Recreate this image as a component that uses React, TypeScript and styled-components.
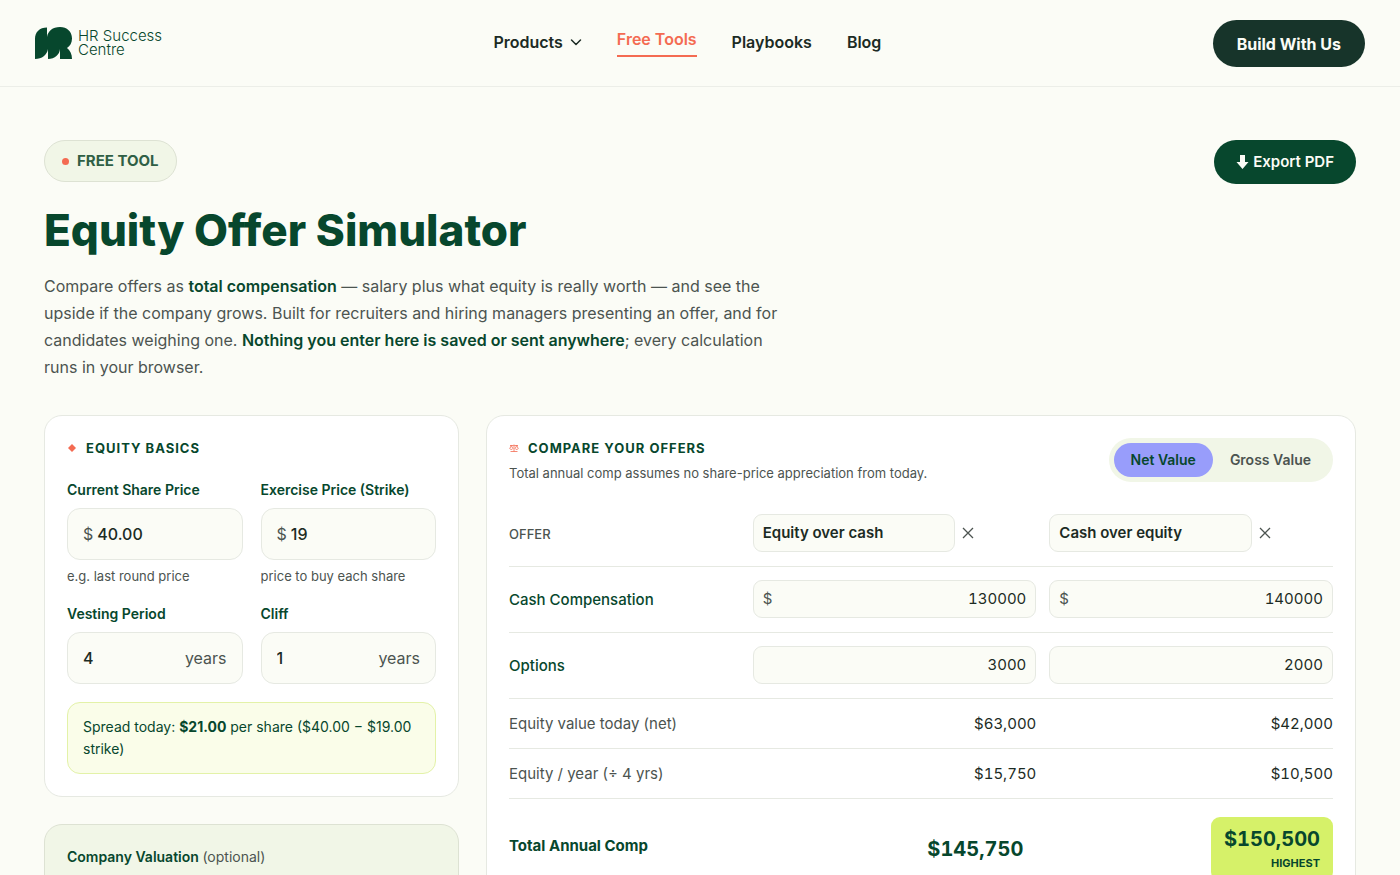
import React, { useState } from "react";
import styled, { createGlobalStyle } from "styled-components";

const green = "#07472d";
const ink = "#1c2b24";
const muted = "#4c5450";
const cream = "#fbfcf6";
const line = "#e6e9e2";
const coral = "#f46b52";
const sage = "#f1f6e7";

const GlobalStyle = createGlobalStyle`
  *, *::before, *::after { box-sizing: border-box; }
  body {
    margin: 0;
    background: ${cream};
    color: ${ink};
    font-family: Inter, "Liberation Sans", sans-serif;
    font-size: 16px;
    line-height: 24px;
  }
  button, input { font: inherit; color: inherit; }
`;

const Header = styled.header`
  display: flex;
  align-items: center;
  justify-content: space-between;
  padding: 20px 35px 19px;
  border-bottom: 1px solid #eceee8;
`;

const Logo = styled.a`
  display: flex;
  align-items: center;
  gap: 6px;
  padding-bottom: 2px;
  color: ${green};
  font-size: 15px;
  font-weight: 300;
  line-height: 14px;
  text-decoration: none;
`;

const Nav = styled.nav`
  display: flex;
  align-items: center;
  gap: 35px;
  padding-bottom: 3px;
`;

const NavLink = styled.a<{ $active?: boolean }>`
  display: flex;
  align-items: center;
  gap: 7px;
  padding-bottom: ${(p) => (p.$active ? "4px" : "0")};
  border-bottom: ${(p) => (p.$active ? `2px solid ${coral}` : "0")};
  color: ${(p) => (p.$active ? coral : ink)};
  font-size: 16px;
  font-weight: 600;
  text-decoration: none;
`;

const PillButton = styled.button<{ $dark?: boolean }>`
  display: flex;
  align-items: center;
  gap: 4px;
  height: ${(p) => (p.$dark ? "47px" : "44px")};
  padding: 0 ${(p) => (p.$dark ? "24px" : "22px")};
  border: 0;
  border-radius: 24px;
  background: ${(p) => (p.$dark ? "#17342a" : green)};
  color: ${cream};
  font-size: ${(p) => (p.$dark ? "16px" : "15px")};
  font-weight: ${(p) => (p.$dark ? 700 : 600)};
  white-space: nowrap;
  cursor: pointer;
`;

const Main = styled.main`
  padding: 53px 44px;
`;

const Intro = styled.section`
  display: flex;
  align-items: flex-start;
  justify-content: space-between;
  margin-bottom: 34px;
`;

const IntroText = styled.div`
  max-width: 740px;
`;

const Badge = styled.span`
  display: inline-flex;
  align-items: center;
  gap: 8px;
  height: 42px;
  padding: 0 17px;
  border: 1px solid #dde2d3;
  border-radius: 21px;
  background: ${sage};
  color: #2f5f45;
  font-size: 15px;
  font-weight: 700;

  &::before {
    width: 7px;
    height: 7px;
    border-radius: 50%;
    background: ${coral};
    content: "";
  }
`;

const Title = styled.h1`
  margin: 22px 0 17px;
  color: ${green};
  font-size: 44px;
  font-weight: 800;
  line-height: 52px;
`;

const Lead = styled.p`
  margin: 0;
  color: ${muted};
  font-size: 16px;
  line-height: 27px;

  strong { color: ${green}; font-weight: 600; }
`;

const Columns = styled.div`
  display: grid;
  grid-template-columns: 415fr 870fr;
  align-items: start;
  gap: 27px;
`;

const SideColumn = styled.div`
  display: grid;
  gap: 27px;
`;

const Card = styled.section<{ $tinted?: boolean }>`
  padding: 22px;
  border: 1px solid ${(p) => (p.$tinted ? "#dde2d3" : line)};
  border-radius: 18px;
  background: ${(p) => (p.$tinted ? sage : "#ffffff")};
`;

const CardTitle = styled.h2`
  display: flex;
  align-items: center;
  gap: 9px;
  margin: 0;
  color: ${green};
  font-size: 13px;
  font-weight: 700;
  letter-spacing: 1px;
  line-height: 20px;
  text-transform: uppercase;
`;

const FieldGrid = styled.div`
  display: grid;
  grid-template-columns: 1fr 1fr;
  gap: 18px;
  margin: 22px 0 18px;
`;

const Field = styled.div`
  min-width: 0;
`;

const Label = styled.label`
  display: block;
  margin-bottom: 8px;
  color: ${green};
  font-size: 14px;
  font-weight: 600;
  line-height: 20px;
`;

const Hint = styled.p`
  margin: 6px 0 0;
  color: ${muted};
  font-size: 13px;
  line-height: 20px;
`;

const InputBox = styled.div<{ $compact?: boolean }>`
  display: flex;
  align-items: center;
  gap: 4px;
  height: ${(p) => (p.$compact ? "38px" : "52px")};
  padding: 0 ${(p) => (p.$compact ? "9px" : "15px")};
  border: 1px solid ${line};
  border-radius: ${(p) => (p.$compact ? "9px" : "13px")};
  background: ${cream};
  color: ${muted};
  font-size: ${(p) => (p.$compact ? "15px" : "16px")};
`;

const BareInput = styled.input<{ $end?: boolean; $strong?: boolean }>`
  flex: 1;
  width: 0;
  min-width: 0;
  padding: 0;
  border: 0;
  outline: 0;
  background: transparent;
  color: ${ink};
  font-weight: ${(p) => (p.$strong ? 600 : p.$end ? 400 : 500)};
  font-variant-numeric: ${(p) => (p.$end ? "tabular-nums" : "normal")};
  text-align: ${(p) => (p.$end ? "right" : "left")};
`;

const Note = styled.p`
  margin: 0;
  padding: 13px 15px;
  border: 1px solid #e3f2a8;
  border-radius: 13px;
  background: #fafde9;
  color: ${green};
  font-size: 14px;
  line-height: 22px;
`;

const Optional = styled.span`
  color: ${muted};
  font-weight: 400;
`;

const CompareHead = styled.div`
  display: flex;
  align-items: flex-start;
  justify-content: space-between;
  margin-bottom: 17px;
`;

const Caption = styled.p`
  margin: 4px 0 0;
  color: ${muted};
  font-size: 13px;
  line-height: 22px;
`;

const Toggle = styled.div`
  display: flex;
  padding: 5px;
  border-radius: 22px;
  background: ${sage};
`;

const ToggleButton = styled.button<{ $on: boolean }>`
  height: 34px;
  padding: 0 17px;
  border: 0;
  border-radius: 17px;
  background: ${(p) => (p.$on ? "#989dfb" : "transparent")};
  color: ${(p) => (p.$on ? green : muted)};
  font-size: 14px;
  font-weight: 600;
  cursor: pointer;
`;

const Table = styled.table`
  width: 100%;
  border-collapse: collapse;
  table-layout: fixed;
  font-size: 15px;

  tbody tr:last-child { border-bottom: 0; }
`;

const Column = styled.col<{ $share: number }>`
  width: ${(p) => p.$share}%;
`;

const Row = styled.tr`
  border-bottom: 1px solid ${line};
`;

const RowLabel = styled.th<{ $tone?: "plain" | "input" | "total" | "head" }>`
  padding: 0;
  color: ${(p) => (p.$tone === "input" || p.$tone === "total" ? green : muted)};
  font-size: ${(p) => (p.$tone === "head" ? "13px" : "15px")};
  font-weight: ${(p) => (p.$tone === "total" ? 700 : p.$tone === "plain" ? 400 : 500)};
  text-align: left;
`;

const Cell = styled.td<{ $field?: boolean }>`
  padding: 13px 0 ${(p) => (p.$field ? "14px" : "12px")} 13px;
  font-variant-numeric: tabular-nums;
  text-align: right;
`;

const HeadCell = styled.th`
  padding: 13px 0 14px 13px;
`;

const OfferName = styled.div`
  display: grid;
  grid-template-columns: 202fr 75fr;
  align-items: center;
  gap: 6px;
`;

const RemoveButton = styled.button`
  display: flex;
  justify-self: start;
  padding: 0;
  border: 0;
  background: transparent;
  color: ${muted};
  cursor: pointer;
`;

const Total = styled.div<{ $best?: boolean }>`
  display: inline-block;
  margin-top: 5px;
  padding: 8px 13px;
  border-radius: 9px;
  background: ${(p) => (p.$best ? "#d6f169" : "transparent")};
  color: ${green};
  font-size: 20px;
  font-weight: 700;
  line-height: 28px;
`;

const BestTag = styled.div`
  font-size: 11px;
  line-height: 20px;
`;

const dollars = (n: number) => "$" + n.toLocaleString("en-US");

const offers = [
  { name: "Equity over cash", cash: 130000, options: 3000 },
  { name: "Cash over equity", cash: 140000, options: 2000 },
];
const spread = 21;
const years = 4;
const totals = offers.map((o) => o.cash + (o.options * spread) / years);
const best = Math.max(...totals);

function LogoMark() {
  return (
    <svg width="37" height="32" viewBox="0 0 37 32" fill={green} aria-hidden="true">
      <path d="M0 12C0 5 4.500 .5 12 .5V10C13 4 17.500 0 25 0C32 0 37 4.500 37 11.500C37 16 35 19 32 21C35 23.500 37 27 37 32H25V22C24.500 27.500 20 32 13 32V22C12 28 7 32 0 32Z" />
    </svg>
  );
}

function Diamond() {
  return (
    <svg width="10" height="10" viewBox="0 0 10 10" fill={coral} aria-hidden="true">
      <path d="M5 1L9 5L5 9L1 5Z" />
    </svg>
  );
}

function Scales() {
  return (
    <svg width="10" height="10" viewBox="0 0 10 10" fill="none" stroke={coral} strokeWidth="0.8" aria-hidden="true">
      <path d="M1 2.500H4L5 2L6 2.500H9M5 2V8.500M1.500 8.500H8.500M2.300 2.500L.8 5.500C1.200 6.800 3.400 6.800 3.800 5.500ZM7.700 2.500L6.200 5.500C6.600 6.800 8.800 6.800 9.200 5.500Z" />
    </svg>
  );
}

function Cross() {
  return (
    <svg width="14" height="14" viewBox="0 0 14 14" fill="none" stroke="currentColor" strokeWidth="1.300" aria-hidden="true">
      <path d="M2 2L12 12M12 2L2 12" />
    </svg>
  );
}

function BasicField(props: { id: string; label: string; value: string; prefix?: string; suffix?: string; hint?: string }) {
  return (
    <Field>
      <Label htmlFor={props.id}>{props.label}</Label>
      <InputBox>
        {props.prefix}
        <BareInput id={props.id} defaultValue={props.value} />
        {props.suffix}
      </InputBox>
      {props.hint && <Hint>{props.hint}</Hint>}
    </Field>
  );
}

export default function App() {
  const [net, setNet] = useState(true);
  return (
    <>
      <GlobalStyle />
      <Header>
        <Logo href="#">
          <LogoMark />
          <span>HR Success<br />Centre</span>
        </Logo>
        <Nav>
          <NavLink href="#">
            Products
            <svg width="12" height="12" viewBox="0 0 12 12" fill="none" stroke="currentColor" strokeWidth="1.500" strokeLinecap="round" strokeLinejoin="round" aria-hidden="true">
              <path d="M1.500 4L6 8.500L10.500 4" />
            </svg>
          </NavLink>
          <NavLink href="#" $active>Free Tools</NavLink>
          <NavLink href="#">Playbooks</NavLink>
          <NavLink href="#">Blog</NavLink>
        </Nav>
        <PillButton $dark>Build With Us</PillButton>
      </Header>
      <Main>
        <Intro>
          <IntroText>
            <Badge>FREE TOOL</Badge>
            <Title>Equity Offer Simulator</Title>
            <Lead>
              Compare offers as <strong>total compensation</strong> — salary plus what equity is really worth — and see the
              upside if the company grows. Built for recruiters and hiring managers presenting an offer, and for
              candidates weighing one. <strong>Nothing you enter here is saved or sent anywhere</strong>; every calculation
              runs in your browser.
            </Lead>
          </IntroText>
          <PillButton>
            <svg width="13" height="16" viewBox="0 0 13 16" fill="currentColor" aria-hidden="true">
              <path d="M4 1H9V8H12.500L6.500 15L.5 8H4Z" />
            </svg>
            Export PDF
          </PillButton>
        </Intro>
        <Columns>
          <SideColumn>
            <Card>
              <CardTitle><Diamond />Equity Basics</CardTitle>
              <FieldGrid>
                <BasicField id="price" label="Current Share Price" prefix="$" value="40.00" hint="e.g. last round price" />
                <BasicField id="strike" label="Exercise Price (Strike)" prefix="$" value="19" hint="price to buy each share" />
                <BasicField id="vesting" label="Vesting Period" value="4" suffix="years" />
                <BasicField id="cliff" label="Cliff" value="1" suffix="years" />
              </FieldGrid>
              <Note>Spread today: <strong>$21.00</strong> per share ($40.00 − $19.00 strike)</Note>
            </Card>
            <Card $tinted>
              <Label htmlFor="valuation">Company Valuation <Optional>(optional)</Optional></Label>
              <InputBox>
                <BareInput id="valuation" />
              </InputBox>
            </Card>
          </SideColumn>
          <Card>
            <CompareHead>
              <div>
                <CardTitle><Scales />Compare Your Offers</CardTitle>
                <Caption>Total annual comp assumes no share-price appreciation from today.</Caption>
              </div>
              <Toggle>
                <ToggleButton $on={net} onClick={() => setNet(true)}>Net Value</ToggleButton>
                <ToggleButton $on={!net} onClick={() => setNet(false)}>Gross Value</ToggleButton>
              </Toggle>
            </CompareHead>
            <Table>
              <colgroup>
                <Column $share={28} />
                <Column $share={36} />
                <Column $share={36} />
              </colgroup>
              <thead>
                <Row>
                  <RowLabel $tone="head" scope="col">OFFER</RowLabel>
                  {offers.map((o) => (
                    <HeadCell key={o.name} scope="col">
                      <OfferName>
                        <InputBox $compact>
                          <BareInput $strong aria-label="Offer name" defaultValue={o.name} />
                        </InputBox>
                        <RemoveButton aria-label={`Remove ${o.name}`}><Cross /></RemoveButton>
                      </OfferName>
                    </HeadCell>
                  ))}
                </Row>
              </thead>
              <tbody>
                <Row>
                  <RowLabel $tone="input" scope="row">Cash Compensation</RowLabel>
                  {offers.map((o) => (
                    <Cell key={o.name} $field>
                      <InputBox $compact>
                        $<BareInput $end aria-label={`Cash compensation, ${o.name}`} defaultValue={o.cash} />
                      </InputBox>
                    </Cell>
                  ))}
                </Row>
                <Row>
                  <RowLabel $tone="input" scope="row">Options</RowLabel>
                  {offers.map((o) => (
                    <Cell key={o.name} $field>
                      <InputBox $compact>
                        <BareInput $end aria-label={`Options, ${o.name}`} defaultValue={o.options} />
                      </InputBox>
                    </Cell>
                  ))}
                </Row>
                <Row>
                  <RowLabel $tone="plain" scope="row">Equity value today (net)</RowLabel>
                  {offers.map((o) => <Cell key={o.name}>{dollars(o.options * spread)}</Cell>)}
                </Row>
                <Row>
                  <RowLabel $tone="plain" scope="row">Equity / year (÷ 4 yrs)</RowLabel>
                  {offers.map((o) => <Cell key={o.name}>{dollars((o.options * spread) / years)}</Cell>)}
                </Row>
                <Row>
                  <RowLabel $tone="total" scope="row">Total Annual Comp</RowLabel>
                  {totals.map((t) => (
                    <Cell key={t}>
                      <Total $best={t === best}>
                        {dollars(t)}
                        {t === best && <BestTag>HIGHEST</BestTag>}
                      </Total>
                    </Cell>
                  ))}
                </Row>
              </tbody>
            </Table>
          </Card>
        </Columns>
      </Main>
    </>
  );
}
